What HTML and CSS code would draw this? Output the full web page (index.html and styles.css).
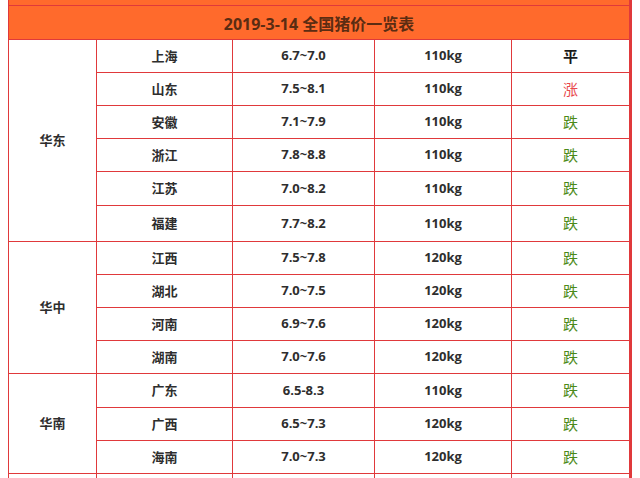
FILE: index.html
```html
<!DOCTYPE html>
<html lang="zh-CN">
<head>
<meta charset="utf-8">
<title>2019-3-14 全国猪价一览表</title>
<link rel="stylesheet" href="styles.css">
</head>
<body>
<div class="table">
  <div class="cap"></div>
  <div class="title">2019-3-14 全国猪价一览表</div>

  <div class="region r-east">华东</div>
  <div class="c">上海</div><div class="c">6.7~7.0</div><div class="c">110kg</div><div class="c flat">平</div>
  <div class="c">山东</div><div class="c">7.5~8.1</div><div class="c">110kg</div><div class="c up">涨</div>
  <div class="c">安徽</div><div class="c">7.1~7.9</div><div class="c">110kg</div><div class="c down">跌</div>
  <div class="c">浙江</div><div class="c">7.8~8.8</div><div class="c">110kg</div><div class="c down">跌</div>
  <div class="c">江苏</div><div class="c">7.0~8.2</div><div class="c">110kg</div><div class="c down">跌</div>
  <div class="c">福建</div><div class="c">7.7~8.2</div><div class="c">110kg</div><div class="c down">跌</div>

  <div class="region r-central">华中</div>
  <div class="c">江西</div><div class="c">7.5~7.8</div><div class="c">120kg</div><div class="c down">跌</div>
  <div class="c">湖北</div><div class="c">7.0~7.5</div><div class="c">120kg</div><div class="c down">跌</div>
  <div class="c">河南</div><div class="c">6.9~7.6</div><div class="c">120kg</div><div class="c down">跌</div>
  <div class="c">湖南</div><div class="c">7.0~7.6</div><div class="c">120kg</div><div class="c down">跌</div>

  <div class="region r-south">华南</div>
  <div class="c">广东</div><div class="c">6.5-8.3</div><div class="c">110kg</div><div class="c down">跌</div>
  <div class="c">广西</div><div class="c">6.5~7.3</div><div class="c">120kg</div><div class="c down">跌</div>
  <div class="c">海南</div><div class="c">7.0~7.3</div><div class="c">120kg</div><div class="c down">跌</div>

  <div class="region r-next"></div>
  <div class="c"></div><div class="c"></div><div class="c"></div><div class="c"></div>
</div>
</body>
</html>
```

FILE: styles.css
```css
html, body {
  margin: 0;
  padding: 0;
  background: #ffffff;
  height: 478px;
  overflow: hidden;
}
body {
  padding-left: 8px;
  font-family: "Open Sans", "Noto Sans CJK SC", sans-serif;
}
.table {
  width: 622px;
  display: grid;
  grid-template-columns: 87px 135px 141px 136px 117px;
  grid-template-rows: 5px 33px 32px 32px 32px 32px 33px 35px 32px 32px 32px 32px 33px 32px 32px 32px;
  gap: 1px;
  padding: 0 1px 1px 1px;
  background: #e0393b;
}
.cap {
  grid-column: 1 / -1;
  background: #ff6a2c;
}
.title {
  grid-column: 1 / -1;
  background: #ff6a2c;
  display: flex;
  align-items: center;
  justify-content: center;
  font-size: 16px;
  font-weight: 700;
  color: #5b2c12;
}
.region, .c {
  background: #ffffff;
  display: flex;
  align-items: center;
  justify-content: center;
  padding-bottom: 2px;
  font-size: 13px;
  font-weight: 700;
  color: #2e2e2e;
}
.r-east { grid-row: span 6; }
.r-central { grid-row: span 4; }
.r-south { grid-row: span 3; }
.r-next { grid-row: span 1; }
.flat { color: #1a1a1a; font-size: 15px; }
.up { color: #e8484c; font-weight: 400; font-size: 15px; }
.down { color: #4b8a18; font-weight: 400; font-size: 15px; }
```
